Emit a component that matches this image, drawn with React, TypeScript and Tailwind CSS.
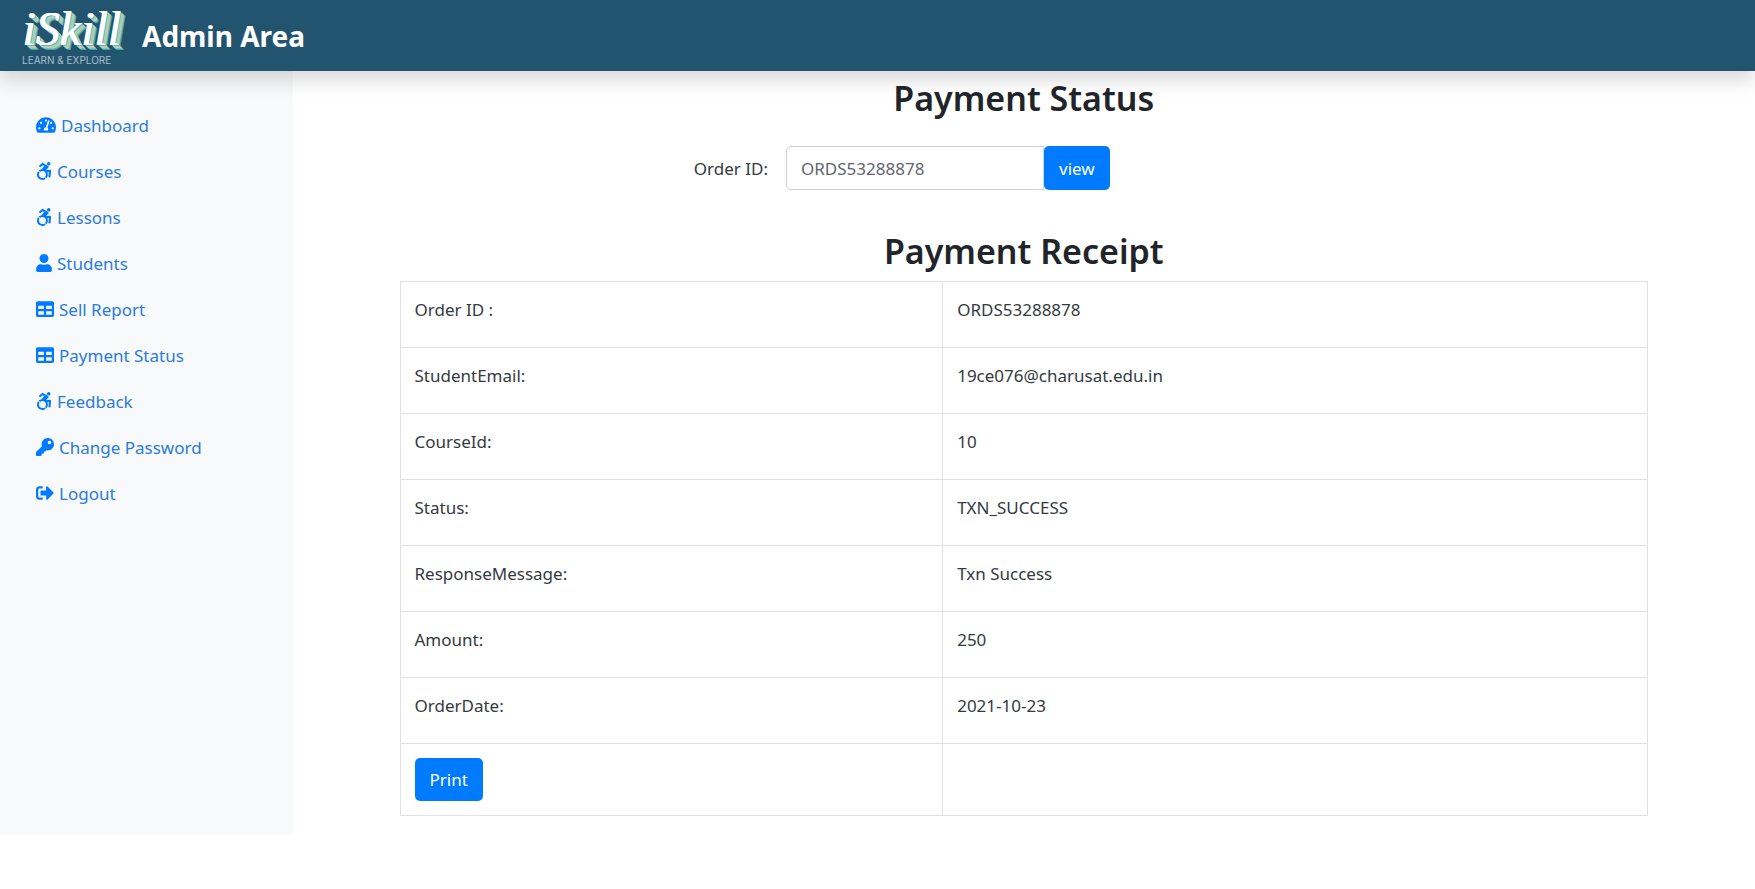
import type { IconType } from "react-icons";
import {
  FaAccessibleIcon,
  FaKey,
  FaSignOutAlt,
  FaTable,
  FaTachometerAlt,
  FaUser,
} from "react-icons/fa";

const links: { label: string; icon: IconType; width: string }[] = [
  { label: "Dashboard", icon: FaTachometerAlt, width: "w-5" },
  { label: "Courses", icon: FaAccessibleIcon, width: "w-4" },
  { label: "Lessons", icon: FaAccessibleIcon, width: "w-4" },
  { label: "Students", icon: FaUser, width: "w-4" },
  { label: "Sell Report", icon: FaTable, width: "w-[18px]" },
  { label: "Payment Status", icon: FaTable, width: "w-[18px]" },
  { label: "Feedback", icon: FaAccessibleIcon, width: "w-4" },
  { label: "Change Password", icon: FaKey, width: "w-[18px]" },
  { label: "Logout", icon: FaSignOutAlt, width: "w-[18px]" },
];

const receipt: [string, string][] = [
  ["Order ID :", "ORDS53288878"],
  ["StudentEmail:", "19ce076@charusat.edu.in"],
  ["CourseId:", "10"],
  ["Status:", "TXN_SUCCESS"],
  ["ResponseMessage:", "Txn Success"],
  ["Amount:", "250"],
  ["OrderDate:", "2021-10-23"],
];

function Logo() {
  return (
    <span className="flex w-[112px] flex-col items-start">
      <span className="font-['Liberation_Serif',serif] text-[48px] leading-[48px] text-white italic [text-shadow:1px_0_0_#ffffff,2px_1px_0_#5fb8b4,3px_2px_0_#9adcd2,4px_3px_0_#d8c3a0,5px_4px_0_#7cc9c1,6px_5px_0_#4fa39f]">
        iSkill
      </span>
      <span className="font-['Inter',sans-serif] text-[10px] leading-[14px] whitespace-nowrap text-[#a9bfcb]">
        LEARN &amp; EXPLORE
      </span>
    </span>
  );
}

export default function App() {
  return (
    <div className="min-h-screen bg-white font-['Noto_Sans',sans-serif] text-[17px] leading-[27px] text-[#343a40]">
      <header className="relative z-10 flex h-[71px] items-center bg-[#225470] px-[22px] shadow-[0_9px_18px_rgba(0,0,0,0.15)]">
        <a href="#" className="flex items-center gap-2">
          <Logo />
          <span className="text-[28px] leading-[36px] font-bold text-white">Admin Area</span>
        </a>
      </header>

      <div className="grid grid-cols-6">
        <nav className="bg-[#f8f9fa] pt-[31px]">
          <ul>
            {links.map(({ label, icon: Icon, width }) => (
              <li key={label}>
                <a href="#" className="flex h-[46px] items-center gap-[5px] px-9 text-[#2b7bdc]">
                  <Icon className={`h-[18px] shrink-0 text-[#007bff] ${width}`} />
                  {label}
                </a>
              </li>
            ))}
          </ul>
        </nav>

        <main className="col-span-5 pt-1 pb-[18px]">
          <h1 className="text-center text-[34px] leading-[46px] font-semibold text-[#212529]">
            Payment Status
          </h1>

          <form className="mt-[25px] grid grid-cols-3 gap-x-[18px]" onSubmit={(e) => e.preventDefault()}>
            <label htmlFor="order-id" className="self-center text-right">
              Order ID:
            </label>
            <div className="col-span-2 flex">
              <input
                id="order-id"
                type="text"
                defaultValue="ORDS53288878"
                className="h-11 w-[258px] rounded-l-[5px] border border-[#ced4da] bg-white px-[14px] text-[#5f666d]"
              />
              <button type="submit" className="h-11 rounded-[5px] bg-[#007bff] px-[15px] text-white">
                view
              </button>
            </div>
          </form>

          <section className="mt-[34px] px-[107px]">
            <h2 className="pb-[3px] text-center text-[34px] leading-[54px] font-semibold text-[#212529]">
              Payment Receipt
            </h2>
            <table className="w-full table-fixed border-collapse">
              <colgroup>
                <col className="w-[43.5%]" />
                <col />
              </colgroup>
              <tbody>
                {receipt.map(([name, value]) => (
                  <tr key={name} className="h-[66px]">
                    <th
                      scope="row"
                      className="border border-[#dee2e6] px-[14px] pt-[14px] text-left align-top font-normal"
                    >
                      {name}
                    </th>
                    <td className="border border-[#dee2e6] px-[14px] pt-[14px] align-top">{value}</td>
                  </tr>
                ))}
                <tr>
                  <td className="border border-[#dee2e6] p-[14px]">
                    <button
                      type="button"
                      className="block h-[43px] rounded-[5px] bg-[#007bff] px-[15px] text-white"
                      onClick={() => window.print()}
                    >
                      Print
                    </button>
                  </td>
                  <td className="border border-[#dee2e6]" />
                </tr>
              </tbody>
            </table>
          </section>
        </main>
      </div>
    </div>
  );
}
